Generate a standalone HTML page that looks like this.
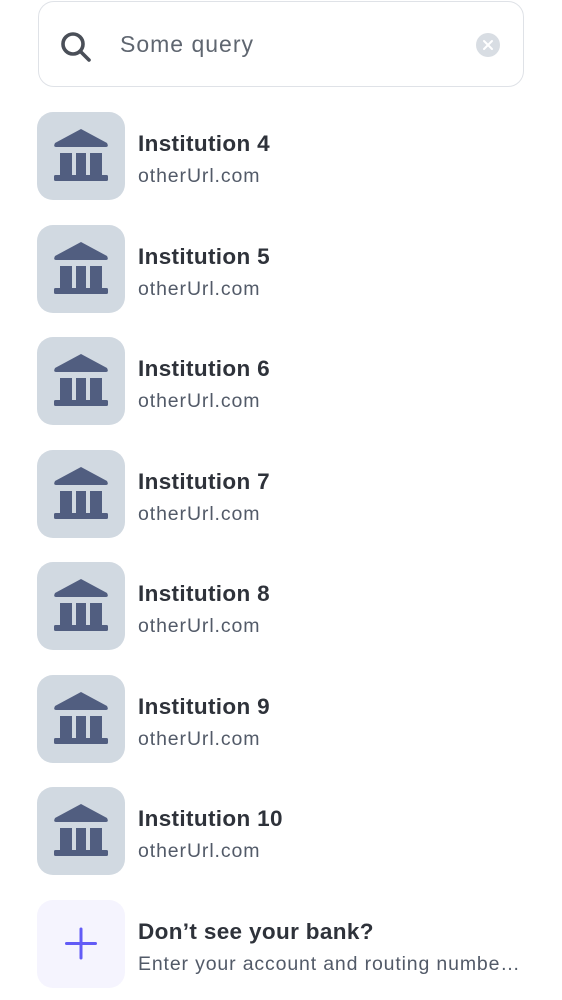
<!DOCTYPE html>
<html><head><meta charset="utf-8"><style>
body{margin:0;width:562px;height:1000px;background:#fff;font-family:"Liberation Sans",Arial,sans-serif;position:relative;overflow:hidden}
.search{position:absolute;left:38px;top:1px;width:484px;height:84px;border:1.5px solid #dfe2e7;border-radius:16px;box-sizing:content-box}
.q{position:absolute;left:81px;top:29px;font-size:23px;color:#5f6670;letter-spacing:1px}
.row{position:absolute;left:37px;width:500px;height:88px}
.tile{position:absolute;left:0;top:0;width:88px;height:88px;border-radius:16px;background:#d1d9e1}
.t{position:absolute;left:101px;top:19px;font-size:22.5px;font-weight:bold;color:#2e323a;letter-spacing:.35px}
.s{position:absolute;left:101px;top:53px;font-size:19.5px;color:#525a68;letter-spacing:.9px;white-space:nowrap}
</style></head><body>
<div class="search">
<svg style="position:absolute;left:19px;top:27px" width="36" height="36" viewBox="0 0 36 36"><circle cx="15" cy="15" r="10" fill="none" stroke="#4a4f58" stroke-width="3.6"/><line x1="22.5" y1="22.5" x2="31" y2="31" stroke="#4a4f58" stroke-width="3.6" stroke-linecap="round"/></svg>
<div class="q">Some query</div>
<svg style="position:absolute;left:436px;top:30px" width="26" height="26" viewBox="0 0 26 26"><circle cx="13" cy="13" r="12" fill="#d8dde3"/><path d="M9 9L17 17M17 9L9 17" stroke="#fff" stroke-width="2" stroke-linecap="round"/></svg>
</div>
<svg width="0" height="0" style="position:absolute"><defs><g id="bank"><path d="M44 17L70 31Q72 35 69 35H19Q16 35 18 31Z" fill="#515e80"/><rect x="23" y="41" width="12" height="22" fill="#515e80"/><rect x="39" y="41" width="10" height="22" fill="#515e80"/><rect x="53" y="41" width="12" height="22" fill="#515e80"/><rect x="17" y="63" width="54" height="6" rx="1.5" fill="#515e80"/></g></defs></svg>
<div class="row" style="top:112px"><div class="tile"><svg width="88" height="88"><use href="#bank"/></svg></div><div class="t">Institution 4</div><div class="s">otherUrl.com</div></div>
<div class="row" style="top:224.5px"><div class="tile"><svg width="88" height="88"><use href="#bank"/></svg></div><div class="t">Institution 5</div><div class="s">otherUrl.com</div></div>
<div class="row" style="top:337px"><div class="tile"><svg width="88" height="88"><use href="#bank"/></svg></div><div class="t">Institution 6</div><div class="s">otherUrl.com</div></div>
<div class="row" style="top:449.5px"><div class="tile"><svg width="88" height="88"><use href="#bank"/></svg></div><div class="t">Institution 7</div><div class="s">otherUrl.com</div></div>
<div class="row" style="top:562px"><div class="tile"><svg width="88" height="88"><use href="#bank"/></svg></div><div class="t">Institution 8</div><div class="s">otherUrl.com</div></div>
<div class="row" style="top:674.5px"><div class="tile"><svg width="88" height="88"><use href="#bank"/></svg></div><div class="t">Institution 9</div><div class="s">otherUrl.com</div></div>
<div class="row" style="top:787px"><div class="tile"><svg width="88" height="88"><use href="#bank"/></svg></div><div class="t">Institution 10</div><div class="s">otherUrl.com</div></div>
<div class="row" style="top:900px"><div class="tile" style="background:#f5f4fe"><svg width="88" height="88" viewBox="0 0 88 88"><path d="M44 29V58M29.5 43.5H58.5" stroke="#625bf6" stroke-width="3" stroke-linecap="round"/></svg></div><div class="t">Don’t see your bank?</div><div class="s" style="letter-spacing:.85px">Enter your account and routing numbe…</div></div>
</body></html>
